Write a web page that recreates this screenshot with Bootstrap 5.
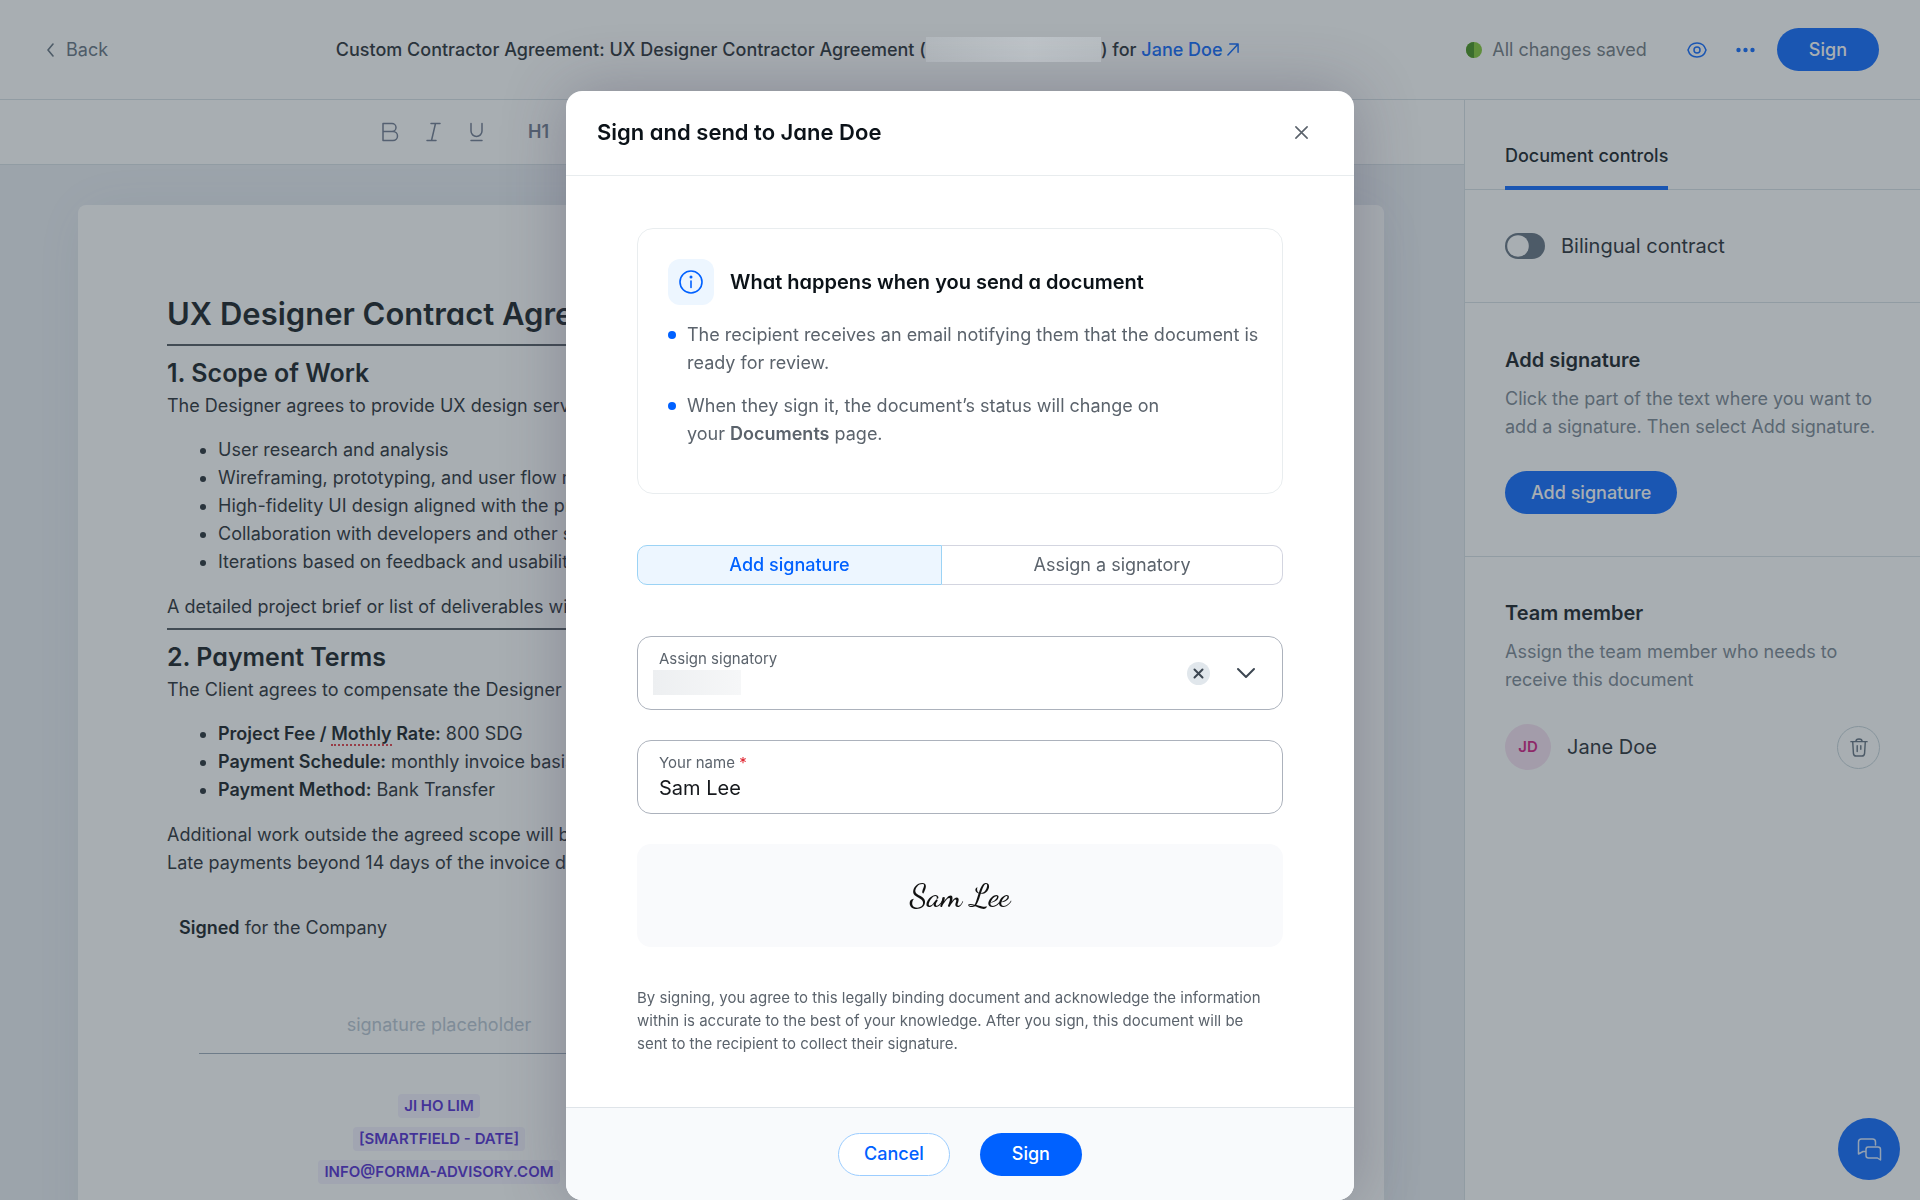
<!DOCTYPE html>
<html lang="en">
<head>
<meta charset="utf-8">
<meta name="viewport" content="width=device-width, initial-scale=1">
<title>Sign and send</title>
<link href="https://cdn.jsdelivr.net/npm/bootstrap@5.3.0/dist/css/bootstrap.min.css" rel="stylesheet">
<style>
:root{--ink:#0b1218;--muted:#5b636c;--soft:#74808c;--steel:#5d6b7a;--blue:#0061ff;--rule:#d6dee5}
body{font-family:Inter,"Liberation Sans",sans-serif;font-size:18px;line-height:28px;color:#1b242c;background:#fff;height:100vh;overflow:hidden}
a{text-decoration:none}
svg{display:block;flex:none;fill:none;stroke:currentColor;stroke-linecap:round;stroke-linejoin:round}
.solid{stroke:none;fill:currentColor}
.leaf{color:#7dc52c}
.leaf-dark{color:#3c8a12}
.geo{font-feature-settings:"cv11","ss03";font-weight:600;color:var(--ink);margin:0}
.app-head{height:100px;padding:0 41px 0 46px;border-bottom:1px solid var(--rule)}
.back{color:var(--steel);gap:11px}
.saved{color:#6b737b;margin:0 40px 0 10px}
.redacted{position:relative;z-index:1045;width:175px;height:25px;background:linear-gradient(90deg,#b4babe,#bfc5c9 60%,#b9bfc3)}
.pill{height:43px;border-radius:22px;font-size:18px;font-weight:500;line-height:28px;padding:0 26px;border:0;background:var(--blue);color:#fff}
.pill-sign{padding:0 32px}
.pill-line{background:#fff;color:var(--blue);border:1px solid #9ccdff;padding:0 25px}
.bare{background:none;border:0;padding:0;color:inherit}
.blue{color:var(--blue)}
.more{margin:0 22px 0 5px}
.tools{height:65px;padding-left:380px;border-bottom:1px solid var(--rule);color:#69748a}
.tool-h{margin-left:18px}
.canvas-area{background:#eaeef3;padding:40px 80px 0 78px;overflow:hidden}
.paper{background:#fff;border-radius:8px;box-shadow:0 0 60px rgba(60,50,110,.07);padding:88px 89px;height:1100px}
.paper h1{font-size:31px;line-height:41px;margin-bottom:10px}
.paper h2{font-size:25px;line-height:37px;margin-top:9px}
.paper hr{margin:7px 0 0;border-top:2px solid #1b242c;opacity:.8}
.paper p{margin:0}
.paper ul{margin:16px 0 17px;padding-left:51px}
.paper b{font-weight:600;color:var(--ink)}
.typo{border-bottom:2px dotted #e2343f}
.sign-col{padding-right:20px}
.paper .signed{margin-top:37px;padding:0 12px}
.sigline{margin:69px 32px 0;border-bottom:1px solid #98a6b5;height:43px;text-align:center;color:#b6c3d0}
.tags{margin-top:40px;gap:9px}
.tags span{font-size:15px;line-height:24px;font-weight:600;color:#4a1fd0;background:#f3effd;border-radius:4px;padding:0 6px}
.side{width:456px;flex:none;border-left:1px solid var(--rule);color:#1b242c}
.side section{padding:0 40px;border-bottom:1px solid var(--rule)}
.side h2{font-size:20px;line-height:28px;font-weight:600;color:var(--ink);margin:0}
.side p{color:var(--soft);margin:11px 0 0}
.side .tab{height:90px;padding-top:42px}
.tab a{color:var(--ink);font-weight:500;height:48px;border-bottom:4px solid var(--blue)}
.side .bilingual{height:113px}
.side .adder{height:254px;padding-top:43px}
.adder .pill{margin-top:30px}
.side .team{padding-top:42px;border:0}
.member{margin-top:30px}
.form-check-input.switch-in{width:40px;height:26px;margin:0;background:#5d6b7a url("data:image/svg+xml,%3csvg xmlns='http://www.w3.org/2000/svg' viewBox='-4 -4 8 8'%3e%3ccircle r='3.6' fill='%23fff'/%3e%3c/svg%3e") 1px center/24px 24px no-repeat;border:0}
.avatar{width:46px;height:46px;border-radius:50%;background:#f6dff0;color:#d0107c;font-size:15px;font-weight:600}
.bin{width:43px;height:43px;border-radius:50%;border:1px solid #c3d1d8;background:none;color:var(--steel)}
.fab{position:fixed;right:20px;bottom:20px;width:62px;height:62px;border-radius:50%;border:0;background:var(--blue);color:#fff}
.scrim{position:fixed;inset:0;background:rgba(58,72,81,.443);z-index:1040}
.sign-modal{z-index:1055;--bs-modal-width:788px;overflow:hidden}
.sign-modal .modal-dialog{margin-top:91px;margin-bottom:0}
.sign-modal .modal-content{border:0;border-radius:16px;box-shadow:0 0 64px rgba(60,50,80,.3);overflow:hidden}
.sign-modal .modal-header{height:85px;padding:0 41px 2px 31px;border-color:#e8ecee}
.sign-modal .modal-title{font-size:22px;line-height:32px}
.sign-modal .modal-body{padding:52px 71px 0;height:931px;color:var(--muted)}
.sign-modal .modal-footer{height:93px;background:#f8fafc;border-color:#dfe4e9;gap:30px;padding:0}
.sign-modal .modal-footer>*{margin:0}
.close-x{color:var(--muted)}
.info{border:1px solid #e9edef;border-radius:16px;height:266px;padding:30px 16px 0 30px}
.info-ico{width:46px;height:46px;border-radius:12px;background:#edf6ff;color:var(--blue)}
.info h3{font-size:20px;line-height:28px}
.info ul{list-style:none;padding:0;margin:16px 0 0}
.info li{position:relative;padding-left:19px;margin-bottom:15px}
.info li::before{content:"";position:absolute;left:0;top:10px;width:8px;height:8px;border-radius:50%;background:var(--blue)}
.seg{margin:51px 0;height:40px}
.seg button{background:#fff;border:1px solid #d3d5e0;border-left:0;border-radius:0 10px 10px 0;color:var(--muted);flex:1 1 0}
.seg .on{background:#edf6ff;border:1px solid #9bd3f5;border-radius:10px 0 0 10px;color:var(--blue);font-weight:500;flex:0 0 305px}
.field{height:74px;border:1px solid #acb2bc;border-radius:14px;padding:10px 21px;margin-bottom:30px}
.field label{font-size:15px;line-height:23px;display:block}
.field input,.field select{border:0;outline:0;padding:0;background:none;display:block;width:100%;color:#16191d;font-size:20px;line-height:28px;height:28px}
.field select{appearance:none;height:25px;margin-left:-6px;background:linear-gradient(90deg,#edeff1,#f6f7f8) 0 0/88px 25px no-repeat}
.req{color:#e0202c}
.clear{width:23px;height:23px;border-radius:50%;background:#e1e7ec;border:0;color:#3c4651}
.chev{margin:0 5px 0 26px;color:#3c4651}
.sigbox{height:103px;border-radius:14px;background:#f9fafc;color:#111;font-family:"Dancing Script","Liberation Serif",cursive;font-size:32px;line-height:40px;font-weight:500}
.legal{font-size:15px;line-height:23px;margin:39px 0 0;padding-right:8px}
</style>
<script src="https://cdn.jsdelivr.net/npm/bootstrap@5.3.0/dist/js/bootstrap.bundle.min.js" defer></script>
</head>
<body class="d-flex flex-column">
<header class="app-head d-flex align-items-center justify-content-between flex-shrink-0">
  <a href="#" class="back d-flex align-items-center"><svg width="9" height="14" viewBox="0 0 9 14" stroke-width="1.6"><path d="M7 1 2 7l5 6"/></svg>Back</a>
  <div class="d-flex align-items-center fw-medium"><span>Custom Contractor Agreement: UX Designer Contractor Agreement (</span><span class="redacted"></span><span>)&nbsp;for&nbsp;</span><a href="#" class="blue d-flex align-items-center gap-1">Jane Doe<svg width="12" height="13" viewBox="0 0 13 14" stroke-width="1.6"><path d="M1 13 12 1M3 1h9v9"/></svg></a></div>
  <div class="d-flex align-items-center">
    <svg width="16" height="16" viewBox="0 0 16 16"><circle class="solid leaf" cx="8" cy="8" r="8"/><path class="solid leaf-dark" d="M8 0a8 8 0 0 0 0 16z"/></svg>
    <span class="saved">All changes saved</span>
    <button class="bare me-4 blue" aria-label="Preview"><svg width="20" height="18" viewBox="0 0 20 18" stroke-width="1.5"><path d="M1 9c1.300-4.600 5-7 9-7s7.700 2.400 9 7c-1.300 4.600-5 7-9 7s-7.700-2.400-9-7z"/><circle cx="10" cy="9" r="3"/></svg></button>
    <button class="bare more blue" aria-label="More"><svg width="19" height="6" viewBox="0 0 19 6"><g class="solid"><circle cx="2.500" cy="3" r="2.200"/><circle cx="9.500" cy="3" r="2.200"/><circle cx="16.500" cy="3" r="2.200"/></g></svg></button>
    <button class="pill pill-sign">Sign</button>
  </div>
</header>
<main class="d-flex flex-grow-1 overflow-hidden">
  <div class="d-flex flex-column flex-grow-1 overflow-hidden">
    <div class="tools d-flex align-items-center flex-shrink-0">
      <button class="bare me-4" aria-label="Bold"><svg width="20" height="20" viewBox="0 0 20 20" stroke-width="1.500"><path d="M3 1.500h9a4 4 0 0 1 0 8H3zM3 9.500h10a4.500 4.500 0 0 1 0 9H3z"/></svg></button>
      <button class="bare me-4" aria-label="Italic"><svg width="20" height="20" viewBox="0 0 20 20" stroke-width="1.500"><path d="M7 1.500h9M3 18.500h9M11.500 1.500l-4 17"/></svg></button>
      <button class="bare me-4" aria-label="Underline"><svg width="18" height="20" viewBox="1 0 18 20" stroke-width="1.500"><path d="M4 1.500V9a5.500 5.500 0 0 0 11 0V1.500M4 18.500h11"/></svg></button>
      <button class="bare tool-h fw-semibold">H1</button>
    </div>
    <div class="canvas-area flex-grow-1">
      <article class="paper">
        <h1 class="geo">UX Designer Contract Agreement</h1>
        <hr>
        <h2 class="geo">1. Scope of Work</h2>
        <p>The Designer agrees to provide UX design services</p>
        <ul><li>User research and analysis</li><li>Wireframing, prototyping, and user flow mapping</li><li>High-fidelity UI design aligned with the project</li><li>Collaboration with developers and other staff</li><li>Iterations based on feedback and usability</li></ul>
        <p>A detailed project brief or list of deliverables will</p>
        <hr>
        <h2 class="geo">2. Payment Terms</h2>
        <p>The Client agrees to compensate the Designer as</p>
        <ul><li><b>Project Fee / <span class="typo">Mothly</span> Rate:</b> 800 SDG</li><li><b>Payment Schedule:</b> monthly invoice basis</li><li><b>Payment Method:</b> Bank Transfer</li></ul>
        <p>Additional work outside the agreed scope will be<br>Late payments beyond 14 days of the invoice date</p>
        <div class="row g-0"><div class="col-6 sign-col">
          <p class="signed"><b>Signed</b> for the Company</p>
          <div class="sigline">signature placeholder</div>
          <div class="tags d-flex flex-column align-items-center"><span>JI HO LIM</span><span>[SMARTFIELD - DATE]</span><span>INFO@FORMA-ADVISORY.COM</span></div>
        </div></div>
      </article>
    </div>
  </div>
  <aside class="side">
    <section class="tab d-flex"><a href="#">Document controls</a></section>
    <section class="bilingual d-flex align-items-center gap-3"><input class="form-check-input switch-in rounded-pill" type="checkbox" role="switch" id="bi"><label for="bi" class="fs-5">Bilingual contract</label></section>
    <section class="adder"><h2>Add signature</h2><p>Click the part of the text where you want to add a signature. Then select Add signature.</p><button class="pill">Add signature</button></section>
    <section class="team"><h2>Team member</h2><p>Assign the team member who needs to receive this document</p>
      <div class="member d-flex align-items-center gap-3"><span class="avatar d-flex align-items-center justify-content-center">JD</span><span class="fs-5 me-auto">Jane Doe</span><button class="bin d-flex align-items-center justify-content-center p-0" aria-label="Remove"><svg width="18" height="21" viewBox="0 0 20 22" stroke-width="1.600"><path d="M1 4.500h18M6.500 4.500C6.500 2 7.500 1.500 10 1.500s3.500.5 3.500 3M3 4.500l.8 13c.2 2 1 3 3 3h6.400c2 0 2.800-1 3-3l.8-13M8 9v6.500M12 9v4"/></svg></button></div>
    </section>
  </aside>
</main>
<button class="fab d-flex align-items-center justify-content-center" aria-label="Chat"><svg width="25" height="23" viewBox="0 0 25 23" stroke-width="1.500" opacity=".85"><path d="M8.500 13.500H6L1.500 16V4Q1.500 1 4.500 1h11q3 0 3 3v3M11 9h10q2.500 0 2.500 2.500V22L20.500 20H11.500Q9 20 9 17.500V11.500Q9 9 11 9z"/></svg></button>
<div class="scrim"></div>
<div class="modal d-block sign-modal" role="dialog" aria-labelledby="mt">
  <div class="modal-dialog"><div class="modal-content">
    <div class="modal-header"><h2 class="modal-title geo" id="mt">Sign and send to Jane Doe</h2><button class="bare close-x p-1" aria-label="Close"><svg width="15" height="15" viewBox="0 0 16 16" stroke-width="1.700"><path d="m2 2 12 12M14 2 2 14"/></svg></button></div>
    <div class="modal-body">
      <div class="info">
        <div class="d-flex align-items-center gap-3"><span class="info-ico d-flex align-items-center justify-content-center"><svg width="26" height="26" viewBox="0 0 26 26" stroke-width="1.600"><circle cx="13" cy="13" r="11"/><path d="M13 12v6.500"/><circle cx="13" cy="8" r=".7" fill="currentColor"/></svg></span><h3 class="geo">What happens when you send a document</h3></div>
        <ul><li>The recipient receives an email notifying them that the document is ready for review.</li><li>When they sign it, the document’s status will change on<br>your <strong class="fw-semibold">Documents</strong> page.</li></ul>
      </div>
      <div class="seg d-flex"><button class="on">Add signature</button><button>Assign a signatory</button></div>
      <div class="field d-flex align-items-center"><div class="flex-grow-1 align-self-start"><label for="who">Assign signatory</label><select id="who"><option></option></select></div>
        <button class="clear d-flex align-items-center justify-content-center p-0" aria-label="Clear"><svg width="11" height="11" viewBox="0 0 11 11" stroke-width="2"><path d="m1.500 1.500 8 8M9.500 1.500l-8 8"/></svg></button>
        <svg class="chev" width="20" height="12" viewBox="0 0 20 12" stroke-width="2"><path d="m2 2 8 8 8-8"/></svg></div>
      <div class="field"><label for="nm">Your name <span class="req">*</span></label><input id="nm" value="Sam Lee"></div>
      <div class="sigbox d-flex align-items-center justify-content-center">Sam Lee</div>
      <p class="legal">By signing, you agree to this legally binding document and acknowledge the information within is accurate to the best of your knowledge. After you sign, this document will be sent to the recipient to collect their signature.</p>
    </div>
    <div class="modal-footer justify-content-center"><button class="pill pill-line">Cancel</button><button class="pill pill-sign">Sign</button></div>
  </div></div>
</div>
</body>
</html>
